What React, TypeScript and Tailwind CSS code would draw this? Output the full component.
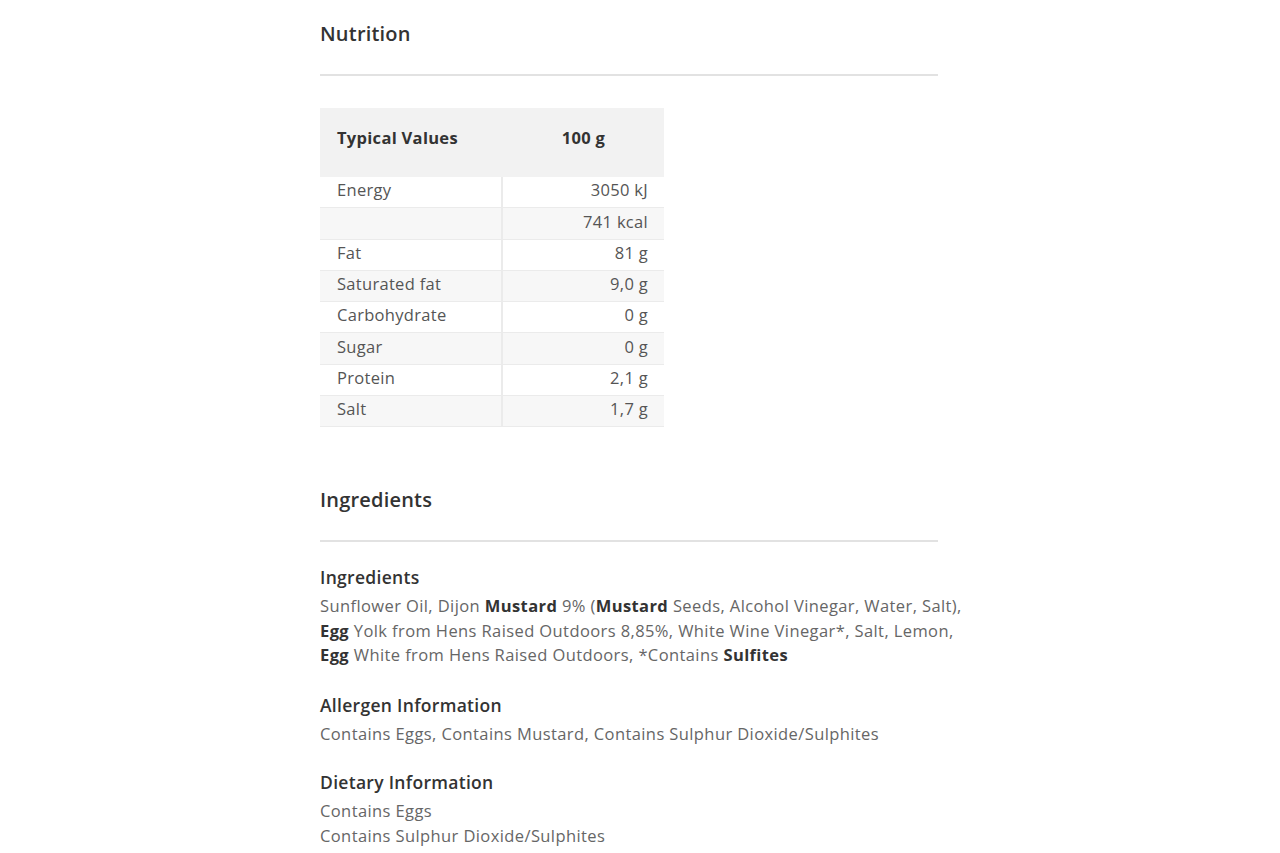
import React from 'react';

const rows: { label: string; value: string }[] = [
  { label: 'Energy', value: '3050 kJ' },
  { label: '', value: '741 kcal' },
  { label: 'Fat', value: '81 g' },
  { label: 'Saturated fat', value: '9,0 g' },
  { label: 'Carbohydrate', value: '0 g' },
  { label: 'Sugar', value: '0 g' },
  { label: 'Protein', value: '2,1 g' },
  { label: 'Salt', value: '1,7 g' },
];

function SectionTitle({ children }: { children: React.ReactNode }) {
  return (
    <>
      <h2 className="text-[20px] leading-[24px] font-semibold tracking-[0.2px] text-[#333]">{children}</h2>
      <div className="mt-[28px] h-[2px] w-[618px] bg-[#e2e2e2]" />
    </>
  );
}

function InfoBlock({ title, children }: { title: string; children: React.ReactNode }) {
  return (
    <div>
      <h3 className="text-[17.5px] leading-[24px] font-semibold tracking-[0.3px] text-[#333]">{title}</h3>
      <div className="mt-[5px] w-[665px] text-[16.5px] leading-[24.5px] tracking-[0.4px] text-[#666]">{children}</div>
    </div>
  );
}

export default function App() {
  return (
    <div className="min-h-screen bg-white" style={{ fontFamily: '"Open Sans", Lato, sans-serif' }}>
      <div className="ml-[320px] pt-[22px] pb-10">
        <SectionTitle>Nutrition</SectionTitle>

        {/* nutrition table */}
        <div className="mt-[32px] w-[344px] text-[16.5px] tracking-[0.3px] text-[#555]">
          <div className="flex h-[69px] items-center bg-[#f2f2f2] pb-[8px] font-bold text-[#333]">
            <div className="w-[183px] pl-[17px]">Typical Values</div>
            <div className="flex-1 text-center">100 g</div>
          </div>
          {rows.map((r, i) => (
            <div
              key={i}
              className={`flex h-[31.25px] border-b border-[#ebebeb] ${i % 2 === 1 ? 'bg-[#f7f7f7]' : 'bg-white'}`}
            >
              <div className="flex w-[183px] items-center border-r-2 border-[#ebebeb] pb-[3px] pl-[17px]">{r.label}</div>
              <div className="flex flex-1 items-center justify-end pb-[3px] pr-[16px]">{r.value}</div>
            </div>
          ))}
        </div>

        <div className="mt-[61px]">
          <SectionTitle>Ingredients</SectionTitle>
        </div>

        <div className="mt-[23px]">
          <InfoBlock title="Ingredients">
            <p>
              Sunflower Oil, Dijon <b className="font-bold text-[#333]">Mustard</b> 9% (
              <b className="font-bold text-[#333]">Mustard</b> Seeds, Alcohol Vinegar, Water, Salt),{' '}
              <b className="font-bold text-[#333]">Egg</b> Yolk from Hens Raised Outdoors 8,85%, White Wine Vinegar*, Salt, Lemon,{' '}
              <b className="font-bold text-[#333]">Egg</b> White from Hens Raised Outdoors, *Contains{' '}
              <b className="font-bold text-[#333]">Sulfites</b>
            </p>
          </InfoBlock>
        </div>

        <div className="mt-[25px]">
          <InfoBlock title="Allergen Information">
            <p>Contains Eggs, Contains Mustard, Contains Sulphur Dioxide/Sulphites</p>
          </InfoBlock>
        </div>

        <div className="mt-[24px]">
          <InfoBlock title="Dietary Information">
            <p>Contains Eggs</p>
            <p>Contains Sulphur Dioxide/Sulphites</p>
          </InfoBlock>
        </div>
      </div>
    </div>
  );
}
